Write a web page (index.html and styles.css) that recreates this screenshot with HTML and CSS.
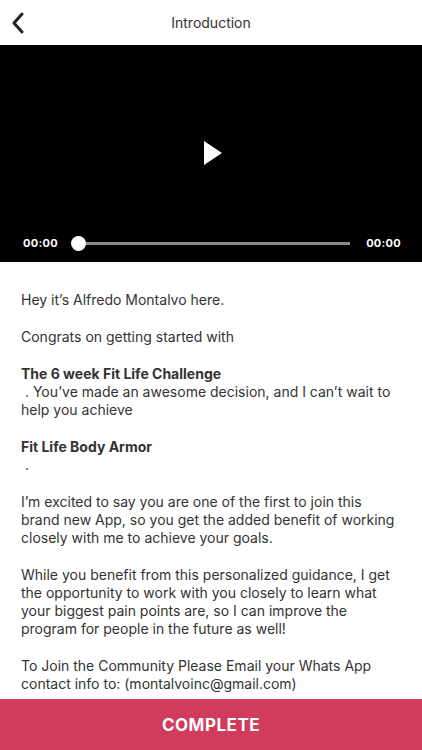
FILE: index.html
```html
<!DOCTYPE html>
<html>
<head>
<meta name="viewport" content="width=device-width, initial-scale=1">
<link rel="stylesheet" href="styles.css">
</head>
<body>

<div class="screen">
  <div class="topbar">
    <span class="back">
      <svg width="14" height="22" viewBox="0 0 14 22"><path d="M11 2 L3 11 L11 20" fill="none" stroke="#222" stroke-width="3" stroke-linecap="round" stroke-linejoin="round"/></svg>
    </span>
    <span class="title">Introduction</span>
  </div>

  <div class="video">
    <div class="video_center">
      <svg width="20" height="24" viewBox="0 0 20 24"><path d="M1 0 L19 12 L1 24 Z" fill="#fff"/></svg>
    </div>
    <div class="controls">
      <span class="time">00:00</span>
      <div class="track"><span class="thumb"></span></div>
      <span class="time">00:00</span>
    </div>
  </div>

  <div class="content">
    <p>Hey it’s Alfredo Montalvo here.</p>
    <p>Congrats on getting started with</p>
    <p><b>The 6 week Fit Life Challenge</b><br>&nbsp;. You’ve made an awesome decision, and I can’t wait to help you achieve</p>
    <p><b>Fit Life Body Armor</b><br>&nbsp;.</p>
    <p>I’m excited to say you are one of the first to join this brand new App, so you get the added benefit of working closely with me to achieve your goals.</p>
    <p>While you benefit from this personalized guidance, I get the opportunity to work with you closely to learn what your biggest pain points are, so I can improve the program for people in the future as well!</p>
    <p>To Join the Community Please Email your Whats App contact info to: (montalvoinc@gmail.com)</p>
  </div>

  <div class="complete">COMPLETE</div>
</div>

</body>
</html>
```

FILE: styles.css
```css
body {
  margin: 0;
  font-family: Inter, "Open Sans", sans-serif;
  background: #fff;
}

.screen {
  width: 422px;
  height: 750px;
  display: flex;
  flex-direction: column;
  overflow: hidden;
}

.topbar {
  height: 45px;
  flex: none;
  display: flex;
  align-items: center;
  justify-content: center;
  position: relative;
}

.back {
  position: absolute;
  left: 11px;
  top: 12px;
  display: flex;
}

.title {
  font-size: 14px;
  color: #333;
}

.video {
  height: 217px;
  flex: none;
  background: #000;
  display: flex;
  flex-direction: column;
}

.video_center {
  flex: 1;
  display: flex;
  align-items: center;
  justify-content: center;
  padding-top: 36px;
  padding-left: 4px;
}

.controls {
  height: 38px;
  display: flex;
  align-items: center;
  padding: 0 21px 0 23px;
}

.time {
  color: #fff;
  font-size: 11px;
  font-weight: 700;
  letter-spacing: 0.3px;
}

.track {
  flex: 1;
  height: 3px;
  margin: 0 16px 0 20px;
  background: #8a8a8a;
  position: relative;
}

.thumb {
  position: absolute;
  left: -7px;
  top: -6px;
  width: 15px;
  height: 15px;
  border-radius: 50%;
  background: #fff;
}

.content {
  flex: 1;
  min-height: 0;
  overflow: hidden;
  padding: 29px 21px 0 21px;
  font-size: 14px;
  line-height: 18px;
  color: #333;
}

.content p {
  margin: 0 0 19px 0;
}

.content b {
  font-weight: 700;
}

.complete {
  height: 51px;
  flex: none;
  background: #d13b5c;
  color: #fff;
  font-size: 17px;
  font-weight: 700;
  letter-spacing: 0.5px;
  display: flex;
  align-items: center;
  justify-content: center;
}
```
